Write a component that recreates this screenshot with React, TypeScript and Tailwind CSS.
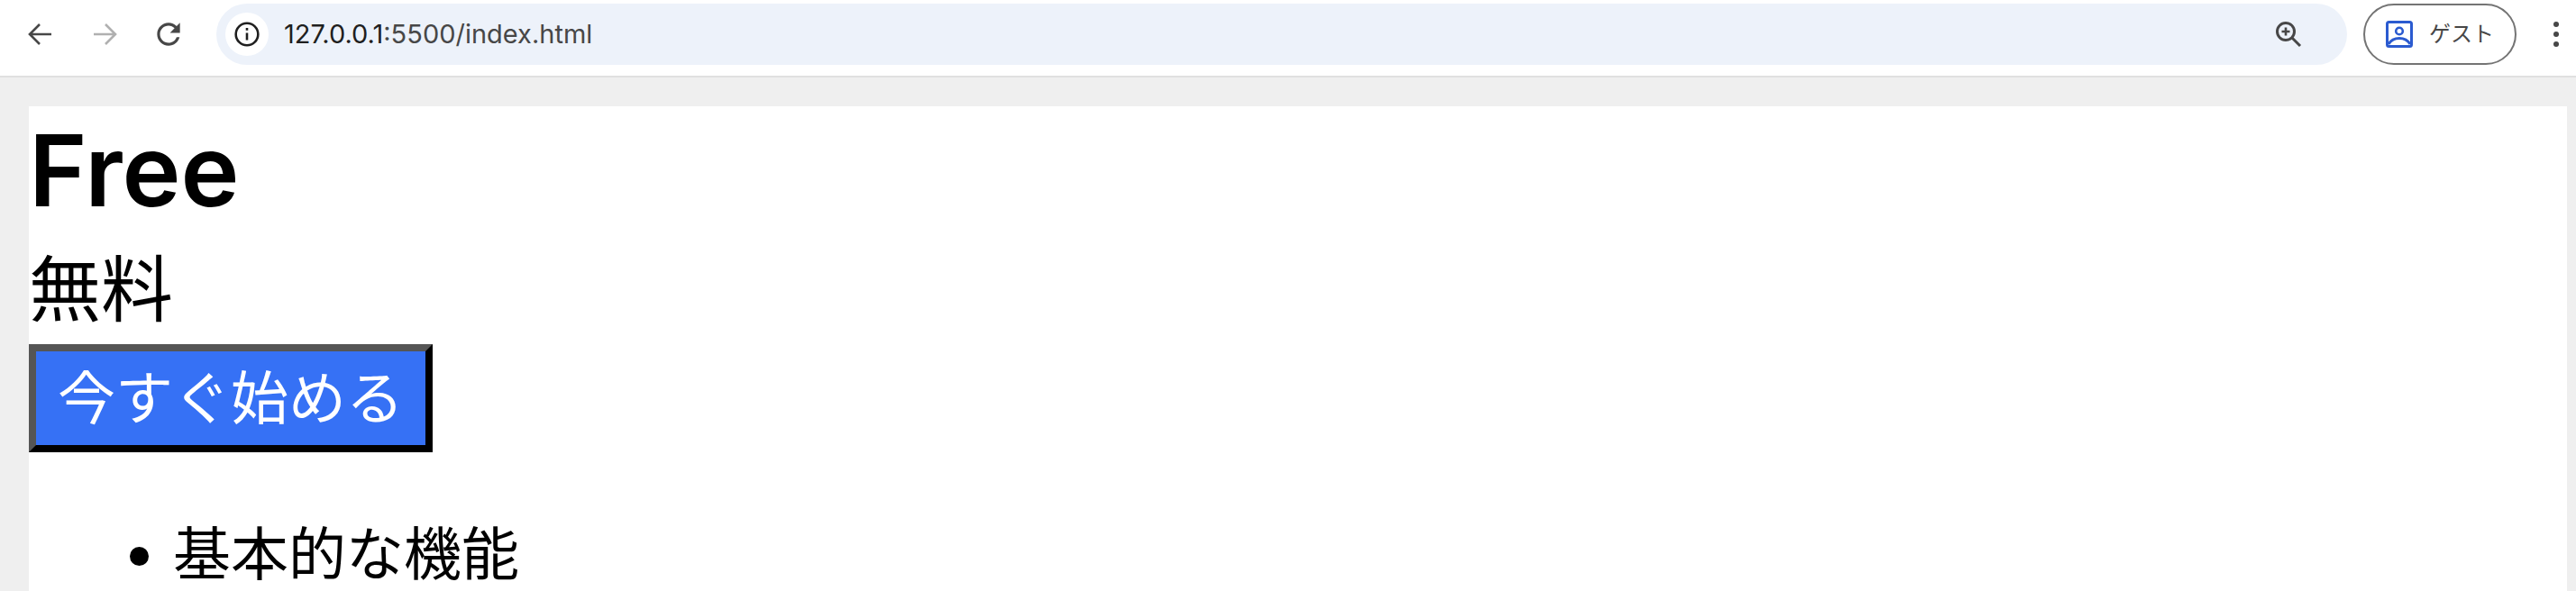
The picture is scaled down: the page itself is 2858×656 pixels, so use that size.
const uiFont = "font-['Inter','Noto_Sans_CJK_JP',sans-serif]"

function Toolbar() {
  return (
    <div className={`flex h-[84px] shrink-0 items-center bg-white pb-[8px] ${uiFont}`}>
      <div className="flex w-[240px] shrink-0 items-center">
        <svg className="ml-[30px] h-[28px] w-[28px]" viewBox="0 0 28 28" fill="none" stroke="#474747" strokeWidth="2.6">
          <path d="M27 14H3M14 3 3 14l11 11" />
        </svg>
        <svg className="ml-[45px] h-[28px] w-[28px]" viewBox="0 0 28 28" fill="none" stroke="#b0b0b0" strokeWidth="2.6">
          <path d="M1 14h24M14 3l11 11-11 11" />
        </svg>
        <svg className="ml-[37px] h-[38px] w-[38px]" viewBox="0 0 24 24" fill="#474747">
          <path d="M17.65 6.35C16.2 4.9 14.21 4 12 4c-4.42 0-7.99 3.58-7.99 8s3.57 8 7.99 8c3.73 0 6.84-2.55 7.73-6h-2.08c-.82 2.33-3.04 4-5.65 4-3.31 0-6-2.69-6-6s2.69-6 6-6c1.66 0 3.14.69 4.22 1.78L13 11h7V4l-2.35 2.35z" />
        </svg>
      </div>

      <div className="flex h-[68px] flex-1 items-center rounded-full bg-[#edf2fa] pl-[10px] pr-[50px]">
        <div className="flex h-[48px] w-[48px] items-center justify-center rounded-full bg-white">
          <svg className="h-[30px] w-[30px]" viewBox="0 0 28 28" fill="none" stroke="#1f1f1f" strokeWidth="2.4">
            <circle cx="14" cy="14" r="11.5" />
            <path d="M14 12.5V20M14 7.5v2.6" />
          </svg>
        </div>
        <span className="ml-[17px] text-[29px] text-[#1f1f1f]">
          127.0.0.1<span className="text-[#474747]">:5500/index.html</span>
        </span>
        <svg className="ml-auto h-[30px] w-[30px]" viewBox="0 0 30 30" fill="none" stroke="#474747" strokeWidth="3">
          <circle cx="12" cy="12" r="9.5" />
          <path d="M19 19l9 9" />
          <path d="M12 7.5v9M7.5 12h9" strokeWidth="2.6" />
        </svg>
      </div>

      <div className="ml-[18px] flex h-[68px] w-[170px] items-center rounded-full border-2 border-[#747474] pl-[23px]">
        <svg className="h-[30px] w-[30px]" viewBox="0 0 30 30" fill="none">
          <rect x="1.5" y="1.5" width="27" height="27" rx="2" stroke="#2b5bd0" strokeWidth="3" />
          <circle cx="15" cy="11.5" r="3.8" stroke="#2b5bd0" strokeWidth="2.6" />
          <path d="M3 26c3-5 7-6.5 12-6.5S24 21 27 26" stroke="#2b5bd0" strokeWidth="3" />
        </svg>
        <span className="ml-[18px] text-[24px] text-[#474747]">ゲスト</span>
      </div>

      <div className="ml-[41px] flex flex-col gap-[5px]">
        <div className="h-[6px] w-[6px] rounded-full bg-[#474747]" />
        <div className="h-[6px] w-[6px] rounded-full bg-[#474747]" />
        <div className="h-[6px] w-[6px] rounded-full bg-[#474747]" />
      </div>
      <div className="w-[19px] shrink-0" />
    </div>
  )
}

export default function App() {
  return (
    <div lang="ja" className="flex h-[656px] flex-col overflow-hidden bg-[#efefef]">
      <Toolbar />
      <div className="h-[2px] shrink-0 bg-[#e0e0e0]" />
      <main className="ml-[32px] mr-[10px] mt-[32px] flex-1 bg-white font-['Inter','Noto_Sans_CJK_JP',sans-serif] text-black">
        <h1 className="h-[132px] text-[110px] font-semibold leading-[142px]">Free</h1>
        <p className="h-[132px] text-[80px] leading-[142px]">無料</p>
        <button className="block h-[120px] border-8 border-t-[#555555] border-l-[#555555] border-r-black border-b-black bg-[#3671f5] px-[24px] text-[64px] leading-none text-white">
          今すぐ始める
        </button>
        <ul className="mt-[64px] list-disc pl-[160px] text-[64px] leading-[97px]">
          <li>基本的な機能</li>
        </ul>
      </main>
    </div>
  )
}
